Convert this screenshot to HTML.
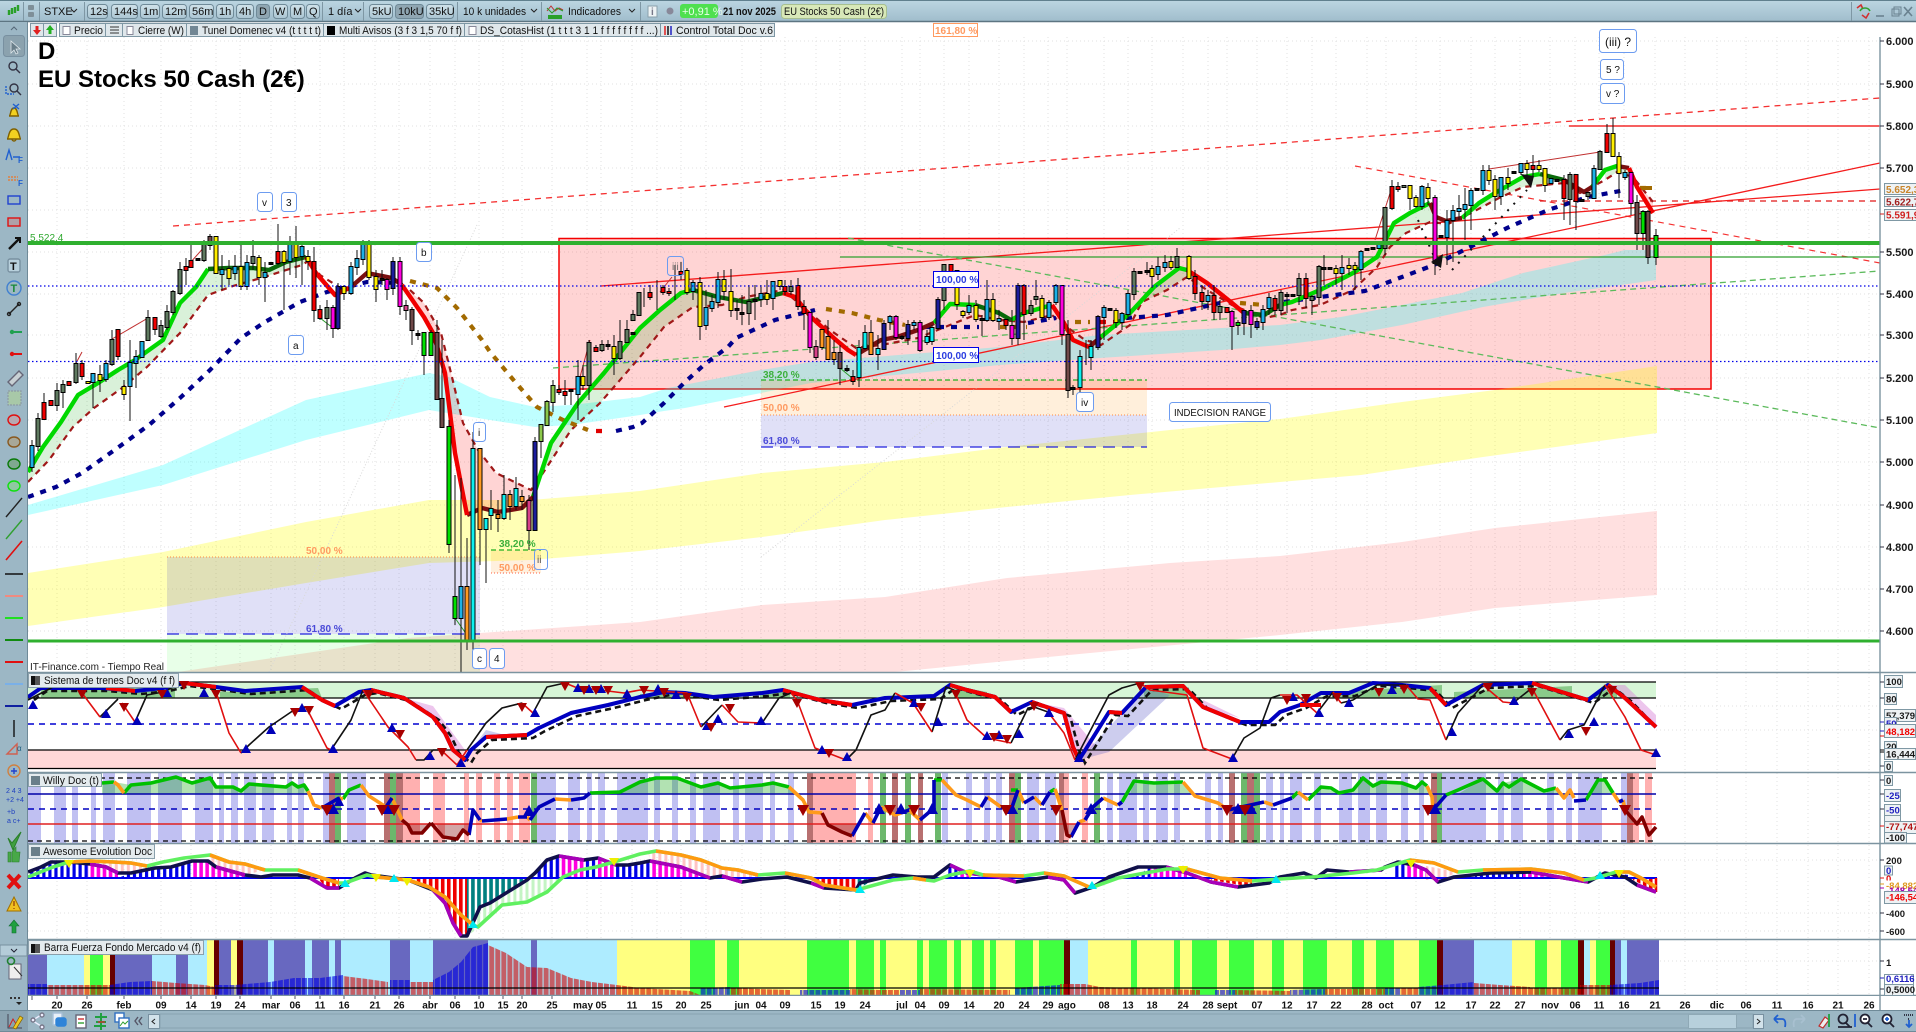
<!DOCTYPE html>
<html lang="es"><head><meta charset="utf-8"><title>EU Stocks 50 Cash (2€)</title>
<style>
html,body{margin:0;padding:0;background:#fff;overflow:hidden}
svg{display:block}
text{font-family:"Liberation Sans",sans-serif;font-size:11px;fill:#111}
.ax text{font-size:9.5px;font-weight:bold;fill:#1a1a1a}
.ax .pr{font-size:11px}
.ax .pb{font-size:10px}
.d text{font-size:10px;fill:#111;text-anchor:middle;font-weight:bold}
.n{fill:none}
.lb{fill:#fff;stroke:#6d9cf0;stroke-width:1}
.bt{fill:url(#btn);stroke:#6f8a98;stroke-width:1}
.sel{fill:#8fa6b2;stroke:#6f8a98;stroke-width:1}
.ce{fill:#dfe7eb;stroke:#7e97a4;stroke-width:1}
.pt{fill:#e4ebee;stroke:#8aa0ac;stroke-width:1}
.bx{fill:#eef2f4;stroke:#7f98a4;stroke-width:1}
.b path{fill:none;stroke-width:3}
</style></head><body>
<svg xmlns="http://www.w3.org/2000/svg" width="1916" height="1032" viewBox="0 0 1916 1032">
<defs>
<linearGradient id="top" x1="0" y1="0" x2="0" y2="1"><stop offset="0" stop-color="#bcd6e2"/><stop offset="1" stop-color="#9fbccb"/></linearGradient>
<linearGradient id="btn" x1="0" y1="0" x2="0" y2="1"><stop offset="0" stop-color="#d0e2ea"/><stop offset="1" stop-color="#aac5d2"/></linearGradient>
<filter id="o" filterUnits="userSpaceOnUse" x="0" y="0" width="1916" height="1032"><feMorphology in="SourceAlpha" operator="dilate" radius="0.8" result="d"/><feMerge><feMergeNode in="d"/><feMergeNode in="SourceGraphic"/></feMerge></filter>
<clipPath id="cm"><rect x="28" y="37" width="1852" height="635"/></clipPath>
<pattern id="pb" width="6.04" height="4" patternUnits="userSpaceOnUse"><rect width="3.2" height="4" fill="#0000e6"/></pattern>
<pattern id="pm" width="6.04" height="4" patternUnits="userSpaceOnUse"><rect width="3.6" height="4" fill="#ff00e0"/></pattern>
<pattern id="pr" width="6.04" height="4" patternUnits="userSpaceOnUse"><rect width="3.6" height="4" fill="#f00000"/></pattern>
<pattern id="pt" width="6.04" height="4" patternUnits="userSpaceOnUse"><rect width="3.6" height="4" fill="#008080"/></pattern>
<pattern id="pp" width="6.04" height="4" patternUnits="userSpaceOnUse"><rect width="3" height="4" fill="#ffc4c4"/></pattern>
<pattern id="pg" width="6.04" height="4" patternUnits="userSpaceOnUse"><rect width="3" height="4" fill="#c4f4c4"/></pattern>
<pattern id="hb" width="6.04" height="4" patternUnits="userSpaceOnUse"><rect width="5" height="4" fill="#0000e0" fill-opacity=".62"/></pattern>
<pattern id="hr" width="6.04" height="4" patternUnits="userSpaceOnUse"><rect width="5" height="4" fill="#d00000" fill-opacity=".6"/></pattern>
</defs>

<rect width="1916" height="1032" fill="#fff"/>

<!-- grid -->
<g stroke="#e2e2e2" stroke-width="1" stroke-dasharray="1 3" fill="none">
<path d="M28 41H1880M28 84H1880M28 126H1880M28 168H1880M28 210H1880M28 252H1880M28 294H1880M28 335H1880M28 378H1880M28 420H1880M28 462H1880M28 505H1880M28 547H1880M28 589H1880M28 631H1880M28 706H1880M28 730H1880M28 860H1880M28 913H1880M28 931H1880M28 961H1880"/>
<path d="M57 37V995M87 37V995M124 37V995M161 37V995M191 37V995M216 37V995M240 37V995M271 37V995M295 37V995M320 37V995M344 37V995M375 37V995M399 37V995M430 37V995M455 37V995M479 37V995M503 37V995M522 37V995M552 37V995M587 37V995M601 37V995M632 37V995M657 37V995M681 37V995M706 37V995M742 37V995M761 37V995M785 37V995M816 37V995M840 37V995M865 37V995M902 37V995M920 37V995M944 37V995M969 37V995M999 37V995M1024 37V995M1048 37V995M1067 37V995M1104 37V995M1128 37V995M1152 37V995M1183 37V995M1208 37V995M1227 37V995M1257 37V995M1287 37V995M1312 37V995M1336 37V995M1367 37V995M1386 37V995M1416 37V995M1440 37V995M1471 37V995M1495 37V995M1520 37V995M1550 37V995M1575 37V995M1599 37V995M1624 37V995M1655 37V995M1685 37V995M1717 37V995M1746 37V995M1777 37V995M1808 37V995M1838 37V995M1869 37V995"/>
</g>

<g clip-path="url(#cm)">
<polygon points="1285,37 1880,37 1880,32.5 1285,23" fill="#d6ffd0"/>
<path d="M1285 23L1880 32.5" stroke="#22e822" stroke-width="1.6" fill="none"/>
<path d="M780 36.5H1880" stroke="#ff8c40" stroke-width="1" stroke-dasharray="5 3" fill="none"/>

<!-- red rectangle -->
<rect x="559" y="238.5" width="1152" height="150.5" fill="#ff0000" fill-opacity=".17" stroke="#f40000" stroke-width="1.5"/>

<!-- bands -->
<polygon fill="#ffff00" fill-opacity=".29" points="28,573 163,552 306,522 429,500 531,500 640,491 762,473 885,462 1007,447 1170,430 1280,419 1402,402 1495,390 1657,366 1657,433 1483,457 1361,475 1280,482 1130,495 1007,507 885,520 762,537 640,551 531,560 429,563 306,583 163,607 28,626"/>
<polygon fill="#ff0000" fill-opacity=".12" points="171,673 408,638 640,622 762,605 885,597 1007,578 1170,563 1280,556 1402,542 1495,528 1657,511 1657,595 1495,608 1402,622 1280,635 1048,657 885,673"/>
<polygon fill="#00ffff" fill-opacity=".25" points="28,505 163,465 306,400 429,373 449,377 490,397 535,407 571,405 640,397 668,388 761,370 811,362 1000,347 1100,335 1222,328 1280,325 1341,317 1402,305 1462,293 1523,273 1605,255 1625,250 1656,250 1656,280 1564,293 1483,307 1402,325 1321,340 1280,345 1222,350 1100,358 1000,365 811,383 761,393 685,408 664,411 640,415 571,425 535,427 490,420 429,410 306,440 163,485 28,515"/>

<!-- retracements -->
<rect x="167" y="557" width="313" height="77" fill="#2020c8" fill-opacity=".14"/>
<rect x="167" y="634" width="313" height="38" fill="#00ff00" fill-opacity=".09"/>
<path d="M167 557H480" stroke="#ff8c40" stroke-dasharray="1 2" fill="none"/>
<path d="M167 634H480" stroke="#2222dd" stroke-width="1.2" stroke-dasharray="12 7" fill="none"/>
<rect x="761" y="380" width="386" height="35" fill="#ff8c00" fill-opacity=".14"/>
<rect x="761" y="415" width="386" height="32" fill="#2020c8" fill-opacity=".14"/>
<path d="M761 380H1147" stroke="#22b022" stroke-width="1.2" stroke-dasharray="5 3" fill="none"/>
<path d="M761 415H1147" stroke="#ff8c40" stroke-dasharray="1 2" fill="none"/>
<path d="M761 447H1147" stroke="#2222dd" stroke-width="1.2" stroke-dasharray="12 7" fill="none"/>
<rect x="491" y="550" width="50" height="23" fill="#ff8c00" fill-opacity=".13"/>
<path d="M491 550H541" stroke="#22b022" stroke-width="1.2" stroke-dasharray="5 3" fill="none"/>
<path d="M491 573H541" stroke="#ff6040" stroke-dasharray="1 2" fill="none"/>

<!-- faint diagonals -->
<path d="M269 672L477 225M761 557L1180 228" stroke="#d8d8d8" stroke-dasharray="1 2" fill="none"/>

<!-- area fills -->
<g fill-opacity=".15" fill="#00a000">
<polygon points="28,472 43,447 61,422 78,395 98,383 118,370 135,360 163,340 180,303 196,287 208,269 229,268 253,268 269,270 286,262 306,257 310,260 302,265 261,278 233,286 208,295 180,333 147,367 122,388 94,408 73,427 49,460 28,482"/>
<polygon points="533,497 551,443 578,403 604,373 640,328 660,310 681,293 693,290 718,297 722,305 693,307 664,327 640,357 600,403 571,430 543,473"/>
<polygon points="1130,313 1154,287 1179,268 1187,270 1207,290 1187,277 1167,290 1142,302"/>
<polygon points="1377,257 1394,223 1410,213 1430,203 1436,217 1430,222 1406,233 1390,247 1377,267"/>
<polygon points="1479,203 1495,193 1523,177 1540,174 1564,180 1523,187 1499,198 1471,213"/>
<polygon points="1605,170 1617,166 1629,168 1633,177 1617,172 1605,180"/>
</g>
<g fill="#ff0000" fill-opacity=".17">
<polygon points="402,285 424,317 433,333 445,373 455,453 467,515 482,508 498,512 522,508 533,497 531,490 496,473 478,450 463,423 451,373 441,333 424,303"/>
<polygon points="1629,168 1637,187 1653,213 1653,202 1633,177"/>
</g>

<!-- trend lines -->
<g fill="none">
<path d="M173 226L1880 98" stroke="#f53030" stroke-width="1.3" stroke-dasharray="6 5"/>
<path d="M1355 166L1880 263" stroke="#f53030" stroke-width="1.2" stroke-dasharray="6 5"/>
<path d="M1540 201H1880" stroke="#e01818" stroke-width="1.2" stroke-dasharray="6 5"/>
<path d="M1569 126H1880" stroke="#f00000" stroke-width="1.3"/>
<path d="M601 286L1880 189M724 407L1880 163" stroke="#f41c1c" stroke-width="1.3"/>
<path d="M840 257H1880" stroke="#2f9f2f" stroke-width="1.2"/>
<path d="M848 238L1880 428M553 368L1880 271" stroke="#5cba5c" stroke-width="1.3" stroke-dasharray="6 4"/>
<path d="M112 339L148 318M190 263L206 245M75 365L82 352M580 377L590 340M1375 240L1392 187M1489 169L1600 152M660 292L672 277" stroke="#c03030" stroke-width="1"/>
<path d="M840 368L852 378M320 318L333 328M455 618L467 635" stroke="#2a9a2a" stroke-width="1"/>
<path d="M1418 220L1440 270M1452 270L1527 190" stroke="#111" stroke-width="2" stroke-dasharray="2 7"/>
</g>

<!-- follow dashed -->
<path fill="none" stroke="#a01818" stroke-width="2.2" stroke-dasharray="6 5" d="M28 482L49 460 73 427 94 408 122 388 147 367 180 333 208 295 233 286 261 278 302 265 310 260 320 275 339 287M410 290L424 303 441 333 451 373 463 423 478 450 496 473 531 490 543 473 571 430 600 403 640 357 664 327 693 307 722 305 746 297 783 290 795 300 830 330 856 348 881 345 918 338 950 325 975 315 1000 320 1024 322 1052 315 1064 325 1085 340 1101 345 1130 325 1142 302 1167 290 1187 277 1207 290 1232 305 1264 318 1280 315 1292 310 1320 305 1353 290 1377 267 1390 247 1406 233 1430 222 1448 224 1471 213 1499 198 1523 187 1564 183 1580 193 1605 180 1617 172 1633 177 1653 202"/>

<!-- navy/brown dashed -->
<g fill="none" stroke-width="4.2" stroke-dasharray="6 7">
<path stroke="#00008c" d="M28 497L56 487 82 473 116 449 149 425 180 398 210 370 241 338 265 322 300 302 327 292 367 282 402 283M616 431L633 427 642 423 664 403 685 382 705 364 728 347 736 338 775 320 815 310M925 327L979 327M1028 323L1056 318M1126 318L1167 315 1220 303M1284 302L1320 297 1365 291 1402 277 1434 265 1470 247 1507 228 1548 210 1588 197 1625 190"/>
<path stroke="#a26a00" d="M410 281L437 288 457 308 482 340 490 352 516 383 537 407 563 420 588 430M826 309L852 313 879 320 905 325M1000 327L1027 327M1075 322L1090 322M1240 303L1264 305M1640 188H1648"/>
<path stroke="#e00000" d="M596 431H608M1100 322H1115"/>
</g>

<!-- main lines -->
<g fill="none" stroke-width="4.4" stroke-linejoin="round">
<path stroke="#00d800" d="M28 472L43 447 61 422 78 395 98 383 118 370 135 360 163 340 180 303 196 287 208 269M533 497L551 443 578 403 604 373 640 328 660 310 681 293 693 290M934 323L950 304 975 305M1011 320L1024 313 1052 305M1101 337L1130 313 1154 287 1179 268 1187 270M1280 305L1292 302 1320 290 1353 273 1377 257 1394 223 1410 213 1430 203M1462 218L1479 203 1495 193 1523 177 1540 174M1592 187L1605 170 1617 166"/>
<path stroke="#0a6a0a" d="M208 269L229 268 253 268 269 270 286 262 306 257M693 290L718 297 746 302 783 293M975 305L999 313 1011 320M1244 313L1264 315 1280 305M1540 174L1564 180"/>
<path stroke="#7a1010" d="M351 287L367 273 392 278 402 285M467 515L482 508 498 512 522 508 533 497M856 355L881 340 897 337 918 330 934 323M1089 347L1101 337M1430 203L1436 217 1446 221 1462 218M1564 180L1584 192 1592 187M1617 166L1629 168"/>
<path stroke="#f00000" d="M306 257L316 273 335 295 351 287M402 285L424 317 433 333 445 373 455 453 467 515M783 293L795 297 811 317 836 340 848 350 856 355M1052 305L1064 323 1073 340 1089 347M1187 270L1207 283 1232 303 1244 313M1629 168L1637 187 1653 213"/>
</g>

<!-- candle wicks -->
<path fill="none" stroke="#111" stroke-width="1" shape-rendering="crispEdges" d="M32 440V472M38 413V451M44 393V420M57 383V411M63 380V408M76 353V384M82 360V380M93 374V408M100 365V392M106 360V382M112 330V366M118 330V360M124 380V400M130 340V421M136 350V388M148 310V340M155 318V335M161 320V338M167 305V330M173 290V315M180 262V295M186 258V285M191 245V265M204 240V262M210 234V250M216 236V273M222 255V290M229 260V285M235 255V280M241 245V290M247 255V290M253 240V270M259 255V285M265 262V302M278 224V265M284 250V310M290 236V275M296 226V278M302 243V285M308 250V270M314 247V322M320 305V320M327 300V330M333 305V338M338 283V330M344 285V300M351 262V295M357 250V275M363 240V265M369 240V280M376 270V302M382 270V285M387 278V300M393 257V295M400 257V315M406 300V320M412 307V345M418 330V340M424 333V375M431 330V355M437 320V400M442 340V427M449 420V553M455 475V625M461 478V672M467 538V650M473 432V650M480 449V565M486 519V583M491 490V530M498 500V532M504 475V520M510 490V520M516 477V510M522 490V510M529 495V550M535 437V530M541 425V458M547 400V425M553 380V412M559 385V395M565 380V405M571 390V405M578 360V420M583 365V390M589 340V400M596 345V352M602 340V352M608 340V350M614 335V375M620 320V360M627 320V342M633 310V320M644 288V307M650 285V300M657 280V310M663 285V295M669 288V296M675 265V300M681 262V280M687 268V295M693 280V300M700 277V340M706 290V330M712 295V312M718 272V308M724 270V300M731 269V317M737 300V320M742 295V325M749 285V325M755 285V320M761 285V307M767 280V305M773 283V310M780 280V290M785 280V295M791 280V295M798 278V310M804 300V330M810 313V353M816 340V360M822 335V350M828 320V360M834 340V365M840 345V385M847 365V372M853 370V385M859 340V387M865 325V350M871 320V350M878 335V370M884 320V350M890 315V330M896 315V340M902 335V340M908 320V345M914 320V330M920 320V352M927 330V345M932 325V345M938 297V330M944 265V310M951 265V275M957 270V310M963 310V318M969 295V315M976 300V322M982 315V336M987 280V322M993 293V322M999 310V330M1006 320V330M1012 310V345M1018 283V345M1024 284V340M1031 300V316M1036 280V305M1042 295V320M1049 300V320M1056 284V305M1062 285V345M1068 320V398M1073 385V395M1080 350V392M1086 340V365M1091 340V370M1098 315V350M1104 305V340M1116 308V328M1122 312V330M1128 290V320M1134 268V300M1147 262V275M1152 265V288M1158 257V280M1165 255V272M1171 256V270M1177 248V268M1189 255V280M1195 270V300M1202 285V310M1208 290V310M1214 285V320M1220 300V320M1232 310V350M1238 320V335M1244 310V335M1251 305V338M1257 318V330M1263 305V330M1269 293V315M1275 295V315M1281 290V315M1287 292V313M1299 273V305M1306 273V308M1312 295V315M1319 265V305M1324 255V285M1336 265V285M1342 255V290M1349 258V275M1355 262V290M1361 250V280M1385 208V255M1392 180V210M1398 182V192M1410 186V210M1416 195V208M1422 185V210M1428 183V205M1435 195V275M1447 210V265M1453 205V262M1459 195V220M1465 188V240M1471 188V230M1483 165V195M1489 165V185M1495 175V210M1501 180V205M1508 168V190M1521 163V175M1527 160V175M1533 155V178M1539 160V172M1545 168V192M1551 178V182M1564 175V220M1570 172V225M1576 175V230M1588 193V200M1594 165V198M1600 150V170M1607 124V152M1613 118V156M1619 152V198M1625 170V180M1631 172V215M1637 195V250M1643 210V250M1648 210V264M1656 229V265"/>

<!-- candle bodies -->
<g class="b" filter="url(#o)" shape-rendering="crispEdges">
<path stroke="#1eb1e6" d="M32 446V467M93 374V382M106 364V379M130 363V386M136 357V363M142 342V357M222 270V274M235 267V273M247 263V286M265 273V277M290 245V261M302 247V256M351 267V293M357 259V267M363 245V259M461 587V618M578 377V394M693 283V291M706 308V325M712 302V308M718 280V302M761 294V299M773 282V298M890 317V322M914 323V325M969 306V312M987 300V320M999 319V321M1049 303V317M1056 286V302M1104 308V317M1122 314V322M1128 294V314M1158 267V274M1165 263V267M1208 296V301M1263 310V322M1269 298V308M1342 268V273M1361 252V269M1379 243V248M1422 187V206M1447 221V237M1453 211V220M1459 209V211M1465 205V209M1471 191V205M1483 171V190M1501 178V196M1521 164V172M1551 179V183M1594 169V198M1625 173V177"/>
<path stroke="#5f7a60" d="M38 419V446M57 391V405M63 385V392M76 364V382M112 340V364M148 318V340M161 326V336M167 312V327M173 292V312M180 270V293M204 245V260M253 257V263M327 308V318M589 343V385M602 345V350M620 342V358M627 330V342M633 315V320M639 293V315M749 302V313M791 287V291M944 265V300M1031 306V313M1036 297V299M1134 272V294M1177 257V267M1220 307V312M1281 293V310M1299 279V295M1312 297V300M1319 267V297M1385 208V248M1404 186V187M1570 175V199M1588 193V196M1600 152V169"/>
<path stroke="#f00000" d="M44 403V419M51 401V405M69 382V385M82 364V376M118 330V356M155 318V329M186 267V270M191 261V267M278 252V263M314 262V310M320 310V318M559 390V392M565 392V395M596 348V351M650 293V297M663 288V292M669 292V293M681 272V274M785 287V291M798 286V306M804 307V313M853 377V381M951 265V271M1006 320V325M1024 286V314M1195 277V293M1202 293V301M1214 296V312M1227 308V312M1275 299V310M1306 279V298M1392 187V208M1398 187V189M1533 166V169M1564 180V198M1576 175V201M1607 134V152"/>
<path stroke="#ffee00" d="M88 382V383M100 375V380M124 387V394M216 237V273M229 269V278M241 267V286M259 258V277M284 252V262M296 245V257M308 257V261M344 287V293M369 245V277M376 277V289M583 377V385M614 347V358M687 271V292M700 283V326M724 280V291M731 292V310M767 294V299M780 281V286M957 271V304M963 312V315M976 306V319M993 300V320M1042 299V317M1116 311V322M1152 269V276M1171 262V267M1189 257V278M1336 269V273M1349 266V268M1355 266V269M1410 186V198M1416 198V206M1428 188V198M1489 171V180M1495 180V196M1508 178V183M1527 164V169M1539 166V169M1545 169V185M1613 134V156M1619 157V173"/>
<path stroke="#00e000" d="M424 333V355M431 333V355M449 427V544M455 597V618M1238 323V325M1643 212V233M1656 236V257"/>
<path stroke="#8cc84c" d="M541 425V441M547 402V425M553 386V402"/>
<path stroke="#ff00e0" d="M333 308V328M387 280V289M400 262V306M810 313V347M896 317V337M920 323V350M1012 326V338M1062 286V334M1232 312V326M1251 311V324M1435 198V263M1631 173V203"/>
<path stroke="#1a1a9c" d="M338 287V328M393 262V288M535 442V530M884 324V349M908 325V338M938 300V328M1018 286V338M1098 317V347M1244 311V323M1257 322V327"/>
<path stroke="#704848" d="M210 237V245M412 310V330M437 333V399M442 399V427M840 353V368M1068 335V390M1637 203V233M1648 212V257"/>
<path stroke="#d84088" d="M406 306V310M529 501V530M816 347V357"/>
<path stroke="#ff9a20" d="M467 587V640M480 449V529M498 515V518M510 495V506M522 497V501M822 330V347M828 337V359M834 353V359M871 333V354"/>
<path stroke="#10f0f0" d="M473 449V640M486 519V529M491 509V515M504 495V518M516 489V506M859 348V377M865 333V348M878 349V354M927 337V342M932 328V341M1080 357V387M1091 347V357"/>
<path stroke="#111" stroke-width="2" d="M198 259V260M271 263V264M382 279V280M418 334V335M571 390V391M608 345V346M633 333V334M737 309V310M742 313V314M755 300V301M847 369V370M902 337V338M982 319V320M1073 388V389M1110 309V310M1140 272V273M1147 271V272M1287 295V296M1293 295V296M1324 268V269M1330 268V269M1367 249V250M1373 248V249M1441 236V237M1477 189V190M1514 172V173M1557 180V181M1582 200V201"/>
</g>
<path d="M1441 268l-10-6 12-8zM1531 188l-10-14 13 2z" fill="#111"/>
<rect x="1645" y="186" width="7" height="4" fill="#a26a00"/>

<!-- horizontal levels -->
<rect x="28" y="241" width="1852" height="4" fill="#2fb02f"/>
<rect x="28" y="639.5" width="1852" height="3" fill="#2fb02f"/>
<path d="M28 286H1878M28 361.5H1878" stroke="#0000e8" stroke-width="1.2" stroke-dasharray="1.5 2.5" fill="none"/>
</g>

<!-- main chart text -->
<text x="38" y="59" style="font-size:24px;font-weight:bold;fill:#000">D</text>
<text x="38" y="87" style="font-size:24px;font-weight:bold;fill:#000">EU Stocks 50 Cash (2€)</text>
<text x="30" y="241" style="font-size:10px;fill:#2fa82f">5.522,4</text>
<text x="30" y="670" style="font-size:10px;fill:#222">IT-Finance.com - Tiempo Real</text>

<g style="font-size:10px">
<text x="306" y="554" style="font-size:10px;font-weight:bold;fill:#ff9a60">50,00 %</text>
<text x="306" y="632" style="font-size:10px;font-weight:bold;fill:#4a4ad8">61,80 %</text>
<text x="499" y="547" style="font-size:10px;font-weight:bold;fill:#3cb03c">38,20 %</text>
<text x="499" y="571" style="font-size:10px;font-weight:bold;fill:#ff9a60">50,00 %</text>
<text x="763" y="378" style="font-size:10px;font-weight:bold;fill:#3cb03c">38,20 %</text>
<text x="763" y="411" style="font-size:10px;font-weight:bold;fill:#ff9a60">50,00 %</text>
<text x="763" y="444" style="font-size:10px;font-weight:bold;fill:#4a4ad8">61,80 %</text>
</g>
<rect x="933.5" y="23.5" width="44" height="13" fill="#fff" stroke="#ff9a60"/>
<text x="935" y="34" style="font-size:10px;font-weight:bold;fill:#ff9a60">161,80 %</text>
<g>
<rect x="933.5" y="271.5" width="45" height="16" fill="#fff" stroke="#0000e8"/><text x="936" y="283" style="font-size:10px;font-weight:bold;fill:#2a3ce0">100,00 %</text>
<rect x="933.5" y="347.5" width="45" height="15" fill="#fff" stroke="#0000e8"/><text x="936" y="359" style="font-size:10px;font-weight:bold;fill:#2a3ce0">100,00 %</text>
</g>
<g>
<rect class="lb" x="257.5" y="192.5" width="15" height="19" rx="3"/><text x="262" y="206" style="font-size:10px">v</text>
<rect class="lb" x="281.5" y="192.5" width="15" height="19" rx="3"/><text x="286" y="206" style="font-size:10px">3</text>
<rect class="lb" x="416.5" y="242.5" width="15" height="19" rx="3"/><text x="421" y="256" style="font-size:10px">b</text>
<rect class="lb" x="288.5" y="335.5" width="15" height="19" rx="3"/><text x="293" y="349" style="font-size:10px">a</text>
<rect class="lb" x="473.5" y="422.5" width="12" height="19" rx="3" fill-opacity=".8"/><text x="478" y="436" style="font-size:10px">i</text>
<rect class="lb" x="534.5" y="549.5" width="13" height="20" rx="3" style="fill:none"/><text x="537" y="563" style="font-size:10px;fill:#555">ii</text>
<rect class="lb" x="472.5" y="648.5" width="14" height="20" rx="3"/><text x="477" y="662" style="font-size:10px">c</text>
<rect class="lb" x="489.5" y="648.5" width="15" height="20" rx="3"/><text x="494" y="662" style="font-size:10px">4</text>
<rect class="lb" x="667.5" y="256.5" width="16" height="19" rx="3" style="fill:none"/><text x="672" y="270" style="font-size:10px;fill:#666">iii</text>
<rect class="lb" x="1076.5" y="392.5" width="17" height="19" rx="3"/><text x="1081" y="406" style="font-size:10px">iv</text>
<rect class="lb" x="1169.5" y="402.5" width="101" height="19" rx="3"/><text x="1174" y="416" textLength="92" lengthAdjust="spacingAndGlyphs" style="font-size:10.5px">INDECISION RANGE</text>
<rect class="lb" x="1599.5" y="29.5" width="37" height="23" rx="3"/><text x="1605" y="46" style="font-size:12px">(iii) ?</text>
<rect class="lb" x="1600.5" y="59.5" width="23" height="20" rx="3"/><text x="1606" y="73" style="font-size:10px">5 ?</text>
<rect class="lb" x="1600.5" y="83.5" width="24" height="20" rx="3"/><text x="1606" y="97" style="font-size:10px">v ?</text>
</g>

<!-- PANEL 2 : Sistema de trenes -->
<rect x="28" y="673" width="1628" height="99" fill="#fff"/>
<rect x="28" y="682" width="1628" height="16" fill="#d6f5d6"/>
<rect x="28" y="750" width="1628" height="18" fill="#ffd8d8"/>
<g fill="#3da03d" fill-opacity=".5">
<polygon points="41,690 175,684 175,698 41,698"/><polygon points="220,692 318,688 322,698 220,698"/><polygon points="954,686 987,692 987,698 954,698"/><polygon points="1144,688 1187,688 1187,698 1144,698"/><polygon points="1333,692 1442,685 1442,698 1333,698"/><polygon points="1454,692 1572,686 1572,698 1454,698"/><polygon points="1592,695 1617,686 1617,698 1592,698"/><polygon points="640,694 700,694 700,698 640,698"/><polygon points="760,693 790,690 790,698 760,698"/>
</g>
<g fill="#d880d8" fill-opacity=".45">
<polygon points="1608,685 1625,685 1656,715 1656,727 1625,698"/><polygon points="404,698 433,706 465,750 453,750 433,717"/><polygon points="1032,702 1064,708 1095,745 1079,760 1064,713"/><polygon points="1203,700 1240,718 1203,707"/>
</g>
<g fill="#5858c8" fill-opacity=".3"><polygon points="1079,760 1146,687 1170,695 1109,752"/><polygon points="471,750 486,730 505,735 486,737"/></g>
<path d="M28 682H1656M28 698H1656M28 750H1656M28 768.5H1656" stroke="#000" stroke-width="1.2" fill="none"/>
<path d="M28 724H1656" stroke="#0000d0" stroke-width="1.6" stroke-dasharray="6 5" fill="none"/>
<path id="s2" fill="none" stroke="#111" stroke-width="2.6" stroke-dasharray="6 4" transform="translate(6 3)" d="M28 697L41 688 102 688 135 691 163 688 184 683 216 687 245 691 302 687 322 700 335 706 359 692 371 690 404 698 433 717 445 733 453 750 465 760 471 750 486 737 527 735 539 728 571 713 608 705 640 697 664 692 685 693 713 697 762 693 783 690 820 700 852 705 885 698 934 696 950 685 967 690 995 697 1011 712 1032 702 1064 713 1073 747 1079 760 1109 712 1122 713 1146 687 1183 686 1203 707 1240 722 1269 722 1280 712 1300 705 1321 693 1349 693 1373 683 1402 685 1430 688 1446 705 1483 685 1532 683 1588 700 1608 685 1625 698 1650 724"/>
<path fill="none" stroke="#0000c0" stroke-width="4" stroke-linejoin="round" d="M28 697L41 688 102 688 135 691 163 688 184 683 216 687 245 691 302 687 322 700 335 706 359 692 371 690 404 698 433 717 445 733 453 750 465 760 471 750 486 737 527 735 539 728 571 713 608 705 640 697 664 692 685 693 713 697 762 693 783 690 820 700 852 705 885 698 934 696 950 685 967 690 995 697 1011 712 1032 702 1064 713 1073 747 1079 760 1109 712 1122 713 1146 687 1183 686 1203 707 1240 722 1269 722 1280 712 1300 705 1321 693 1349 693 1373 683 1402 685 1430 688 1446 705 1483 685 1532 683 1588 700 1608 685 1625 698 1656 727"/>
<path fill="none" stroke="#f00000" stroke-width="4" stroke-linejoin="round" d="M106 688L135 691M184 683L216 687M302 687L322 700 335 706M371 690L404 698 433 717 445 733 453 750 465 760M486 737L527 735M783 690L820 700 852 705M950 685L967 690 995 697 1011 712M1032 702L1064 713 1073 747 1079 760M1109 712L1122 713M1146 687L1183 686 1203 707 1240 722M1300 705L1321 705M1430 688L1446 705M1532 683L1588 700M1608 685L1625 698 1656 727"/>
<path fill="none" stroke="#111" stroke-width="1.6" stroke-linejoin="round" d="M28 700L53 687M100 717L118 699M135 722L147 695 163 692 184 682M241 753L249 745 269 727 294 710 306 707M331 750L351 720 363 690M416 760L424 760 433 750 441 750M467 750L486 723 502 708 522 703M533 713L547 687 565 683M701 727L722 705M762 723L779 698 791 693M846 760L856 750 871 715 885 710 895 693M932 732L946 687 954 690M1011 743L1028 708 1034 707 1048 712M1075 760L1109 695 1122 688 1140 683M1232 759L1244 738 1260 728 1271 698 1280 695M1317 713L1333 692M1341 703L1353 700 1377 685 1406 685M1446 740L1458 713 1483 685M1513 703L1532 688M1560 740L1568 730 1584 725 1605 685"/>
<path fill="none" stroke="#e01010" stroke-width="1.6" stroke-linejoin="round" d="M82 693L100 717M122 703L135 722M216 692L229 733 241 753M306 707L327 748 331 750M363 690L388 727 408 747 416 760M441 750L457 765 467 750M522 703L533 713M565 683L575 687 624 693 640 690 687 693 701 727M722 705L738 722 762 723M791 693L797 700 815 748 846 760M895 693L913 703 932 732M954 690L967 720 987 738 1011 743M1048 712L1064 733 1075 760M1140 683L1150 690 1187 695 1203 748 1232 759M1280 695L1297 695 1317 713M1333 692L1341 703M1406 685L1418 699 1430 700 1446 740M1483 685L1503 702 1513 703M1532 688L1560 740M1605 685L1625 717 1641 750 1656 755"/>
<path fill="#0000b8" d="M33 709h5l-5-9-5 9zM106 718h5l-5-9-5 9zM137 725h5l-5-9-5 9zM167 697h5l-5-9-5 9zM204 697h5l-5-9-5 9zM246 753h5l-5-9-5 9zM271 734h5l-5-9-5 9zM302 712h5l-5-9-5 9zM333 753h5l-5-9-5 9zM392 732h5l-5-9-5 9zM430 760h5l-5-9-5 9zM461 767h5l-5-9-5 9zM535 717h5l-5-9-5 9zM578 692h5l-5-9-5 9zM589 693h5l-5-9-5 9zM601 693h5l-5-9-5 9zM627 698h5l-5-9-5 9zM658 693h5l-5-9-5 9zM676 699h5l-5-9-5 9zM707 730h5l-5-9-5 9zM718 723h5l-5-9-5 9zM761 725h5l-5-9-5 9zM822 754h5l-5-9-5 9zM847 761h5l-5-9-5 9zM914 707h5l-5-9-5 9zM938 726h5l-5-9-5 9zM987 740h5l-5-9-5 9zM999 739h5l-5-9-5 9zM1019 738h5l-5-9-5 9zM1049 717h5l-5-9-5 9zM1079 762h5l-5-9-5 9zM1233 762h5l-5-9-5 9zM1293 701h5l-5-9-5 9zM1319 717h5l-5-9-5 9zM1349 707h5l-5-9-5 9zM1392 694h5l-5-9-5 9zM1452 736h5l-5-9-5 9zM1514 705h5l-5-9-5 9zM1569 738h5l-5-9-5 9zM1594 726h5l-5-9-5 9zM1656 757h5l-5-9-5 9z"/>
<path fill="#a80000" d="M82 690h5l-5 9-5-9zM124 703h5l-5 9-5-9zM162 690h5l-5 9-5-9zM216 690h5l-5 9-5-9zM295 708h5l-5 9-5-9zM309 706h5l-5 9-5-9zM369 690h5l-5 9-5-9zM400 730h5l-5 9-5-9zM442 748h5l-5 9-5-9zM522 703h5l-5 9-5-9zM565 682h5l-5 9-5-9zM584 686h5l-5 9-5-9zM596 686h5l-5 9-5-9zM608 686h5l-5 9-5-9zM184 681h5l-5 9-5-9zM644 686h5l-5 9-5-9zM664 688h5l-5 9-5-9zM687 693h5l-5 9-5-9zM711 723h5l-5 9-5-9zM730 704h5l-5 9-5-9zM797 699h5l-5 9-5-9zM829 749h5l-5 9-5-9zM921 703h5l-5 9-5-9zM956 690h5l-5 9-5-9zM994 733h5l-5 9-5-9zM1007 735h5l-5 9-5-9zM1034 702h5l-5 9-5-9zM1140 682h5l-5 9-5-9zM1287 696h5l-5 9-5-9zM1306 694h5l-5 9-5-9zM1337 693h5l-5 9-5-9zM1379 688h5l-5 9-5-9zM1404 685h5l-5 9-5-9zM1488 683h5l-5 9-5-9zM1532 688h5l-5 9-5-9zM1586 727h5l-5 9-5-9zM1612 686h5l-5 9-5-9z"/>

<!-- PANEL 3 : Willy -->
<rect x="28" y="773" width="1628" height="70" fill="#fff"/>
<path fill="#c0c0f2" d="M28 773H41V843H28zM54 773H66V843H54zM72 773H78V843H72zM91 773H96V843H91zM103 773H115V843H103zM127 773H151V843H127zM158 773H182V843H158zM195 773H213V843H195zM219 773H224V843H219zM231 773H238V843H231zM244 773H256V843H244zM262 773H274V843H262zM287 773H292V843H287zM298 773H304V843H298zM323 773H329V843H323zM347 773H366V843H347zM537 773H556V843H537zM568 773H580V843H568zM587 773H592V843H587zM598 773H605V843H598zM617 773H648V843H617zM654 773H660V843H654zM672 773H678V843H672zM690 773H696V843H690zM703 773H720V843H703zM733 773H739V843H733zM745 773H763V843H745zM770 773H775V843H770zM788 773H794V843H788zM942 773H948V843H942zM966 773H972V843H966zM984 773H990V843H984zM996 773H1002V843H996zM1027 773H1039V843H1027zM1045 773H1056V843H1045zM1107 773H1113V843H1107zM1119 773H1137V843H1119zM1143 773H1149V843H1143zM1156 773H1168V843H1156zM1174 773H1180V843H1174zM1205 773H1211V843H1205zM1218 773H1223V843H1218zM1266 773H1273V843H1266zM1280 773H1284V843H1280zM1290 773H1302V843H1290zM1314 773H1321V843H1314zM1339 773H1352V843H1339zM1358 773H1370V843H1358zM1376 773H1387V843H1376zM1401 773H1408V843H1401zM1419 773H1424V843H1419zM1442 773H1486V843H1442zM1498 773H1504V843H1498zM1511 773H1523V843H1511zM1547 773H1554V843H1547zM1566 773H1572V843H1566zM1578 773H1602V843H1578zM1621 773H1627V843H1621z"/>
<path fill="#ffb0b0" d="M403 773H420V843H403zM433 773H445V843H433zM464 773H469V843H464zM476 773H482V843H476zM494 773H500V843H494zM507 773H513V843H507zM519 773H530V843H519zM813 773H856V843H813zM868 773H873V843H868zM1064 773H1069V843H1064zM1082 773H1088V843H1082zM1633 773H1639V843H1633zM1645 773H1652V843H1645z"/>
<path fill="#b87070" d="M329 773H335V843H329zM384 773H390V843H384zM396 773H403V843H396zM807 773H813V843H807zM892 773H898V843H892zM918 773H923V843H918zM1009 773H1015V843H1009zM1059 773H1064V843H1059zM1229 773H1235V843H1229zM1247 773H1254V843H1247zM1431 773H1437V843H1431zM1627 773H1633V843H1627z"/>
<path fill="#6cb86c" d="M335 773H341V843H335zM390 773H396V843H390zM531 773H537V843H531zM880 773H886V843H880zM905 773H911V843H905zM935 773H941V843H935zM1015 773H1021V843H1015zM1094 773H1100V843H1094zM1241 773H1247V843H1241zM1254 773H1260V843H1254zM1437 773H1442V843H1437z"/>
<g fill="#00a000" fill-opacity=".3">
<polygon points="102,794 102,783 114,782 131,785 151,783 176,777 192,783 210,778 216,787 233,787 241,791 249,784 286,787 292,783 298,787 304,785 308,794"/>
<polygon points="590,794 620,792 640,782 656,778 677,778 701,787 718,783 730,788 762,785 773,783 789,787 795,794"/>
<polygon points="1130,794 1134,781 1154,783 1183,782 1192,794"/>
<polygon points="1310,794 1321,787 1339,793 1353,790 1363,778 1373,786 1381,782 1402,783 1416,788 1422,782 1427,786 1430,794"/>
<polygon points="1458,794 1483,779 1497,791 1503,783 1521,779 1544,791 1556,788 1560,794"/>
<polygon points="1590,794 1598,780 1605,780 1613,793"/>
</g>
<g fill="#800000" fill-opacity=".35">
<polygon points="408,824 412,833 422,833 431,824"/><polygon points="436,824 443,837 457,839 463,830 469,835 471,824"/><polygon points="828,824 842,832 852,836 857,824"/><polygon points="1064,824 1067,835 1071,837 1076,824"/>
</g>
<path d="M28 778H1656M28 841H1656" stroke="#000" stroke-width="1.2" stroke-dasharray="5 4" fill="none"/>
<path d="M28 794H1656" stroke="#0000a8" stroke-width="1.6" fill="none"/>
<path d="M28 809H1656" stroke="#0000c0" stroke-width="1.6" stroke-dasharray="6 5" fill="none"/>
<path d="M28 824H1656" stroke="#e02020" stroke-width="1.6" fill="none"/>
<g fill="none" stroke-width="3.6" stroke-linejoin="round">
<path stroke="#00c000" d="M102 783L114 782M124 793L131 785 151 783 176 777 192 783 210 778 216 787 233 787 241 791 249 784 286 787 292 783 298 787 304 785 308 791M343 799L349 790 361 785M590 793L620 792 640 782 656 778 677 778 701 787 718 783 730 788 762 785 773 783 789 787M934 780L942 780M1011 790L1018 790M1050 792L1055 789M1122 802L1134 781 1154 783 1183 782M1292 798L1298 792M1308 800L1321 787 1331 788 1339 793 1353 790 1363 778 1373 786 1381 782 1402 783 1416 788 1422 782 1427 786M1446 795L1458 790 1483 779 1497 791 1503 783 1509 787 1521 779 1544 791 1556 788M1586 800L1598 780 1605 780 1613 793"/>
<path stroke="#ff9a1a" d="M114 782L118 785 124 793M308 791L314 805 322 808M339 798L343 799M361 785L369 796 386 807M392 798L402 820M480 820L482 821M507 819L518 817M530 820L527 817M555 799L571 800M789 787L803 800 809 812 822 813M865 813L873 823M881 807L895 815 901 813M909 810L920 820M942 780L956 795 967 800M967 800L981 807M987 797L1001 807M1018 790L1024 803M1034 797L1042 805M1055 789L1062 810M1079 822L1085 820M1103 798L1118 805M1183 782L1195 796 1205 799M1205 799L1218 803 1228 810M1264 802L1273 805M1298 792L1308 800M1427 786L1432 797 1433 810M1556 788L1564 798 1570 790 1574 798M1613 793L1619 802M1623 800L1625 810"/>
<path stroke="#0000b8" d="M322 808L339 798M386 807L392 798M469 835L473 810 480 820M482 821L507 819M518 817L527 817M530 820L539 807 555 799M571 800L584 798 590 793M852 836L865 813M873 823L881 807M901 813L909 810M920 820L934 808 934 780M981 807L987 797M1001 807L1011 810 1018 790M1024 803L1034 797M1042 805L1050 792M1071 837L1079 822M1085 820L1093 807 1103 798M1118 805L1122 802M1228 810L1264 802M1273 805L1292 798M1433 810L1446 795M1574 801L1586 800M1619 802L1623 800"/>
<path stroke="#800000" d="M402 820L408 825 412 833 422 833 431 823M431 823L443 837 457 839 463 830 469 835M822 813L828 825 842 832 852 836M1062 810L1067 835 1071 837M1625 810L1637 824 1642 817 1649 835 1656 827"/>
</g>
<path fill="#0000b8" d="M333 814h6l-6-11-6 11zM339 806h5l-5-10-5 10zM388 814h6l-6-11-6 11zM529 816h6l-6-11-6 11zM879 814h6l-6-11-6 11zM901 814h6l-6-11-6 11zM932 814h6l-6-11-6 11zM1012 814h6l-6-11-6 11zM1091 814h6l-6-11-6 11zM1238 814h6l-6-11-6 11zM1251 814h6l-6-11-6 11zM1435 814h6l-6-11-6 11z"/>
<path fill="#a00000" d="M327 805h6l-6 11-6-11zM382 805h6l-6 11-6-11zM394 805h6l-6 11-6-11zM803 805h6l-6 11-6-11zM890 805h6l-6 11-6-11zM914 805h6l-6 11-6-11zM1006 805h6l-6 11-6-11zM1056 805h6l-6 11-6-11zM1227 805h6l-6 11-6-11zM1245 805h6l-6 11-6-11zM1428 805h6l-6 11-6-11zM1625 805h6l-6 11-6-11z"/>

<!-- PANEL 4 : Awesome -->
<g>
<polygon fill="url(#pb)" points="28,878 28,872 41,867 51,862 69,862 88,864 88,878"/>
<polygon fill="url(#pm)" points="88,878 88,864 106,867 118,873 118,878"/>
<polygon fill="url(#pb)" points="118,878 131,873 155,868 171,867 192,861 192,878"/>
<polygon fill="url(#pm)" points="192,878 192,861 208,861 216,867 245,875 250,878"/>
<polygon fill="url(#pr)" points="318,878 326,888 339,888 339,878"/>
<polygon fill="url(#pr)" points="412,878 433,890 445,903 453,923 461,936 467,936 467,878"/>
<polygon fill="url(#pt)" points="467,878 467,936 480,907 490,903 527,880 527,878"/>
<polygon fill="url(#pg)" points="467,936 480,907 490,903 527,880 535,878 563,878 547,892 527,902 502,905 480,927"/>
<polygon fill="url(#pp)" points="131,873 155,868 147,866 114,862 90,861 90,864 118,873"/>
<polygon fill="url(#pp)" points="210,855 229,862 265,870 245,875 216,867 208,861"/>
<polygon fill="url(#pb)" points="535,878 535,873 547,860 559,856 559,878"/>
<polygon fill="url(#pm)" points="559,878 559,856 571,858 584,860 584,878"/>
<polygon fill="url(#pb)" points="584,878 584,860 598,858 598,878"/>
<polygon fill="url(#pm)" points="598,878 598,858 616,865 616,878"/>
<polygon fill="url(#pb)" points="616,878 616,865 640,863 650,861 650,878"/>
<polygon fill="url(#pm)" points="650,878 650,861 681,867 710,878"/>
<polygon fill="url(#pp)" points="648,851 681,855 701,860 722,868 738,870 760,875 760,878 710,878 681,867 650,861"/>
<polygon fill="url(#pr)" points="815,878 823,888 856,890 856,878"/>
<polygon fill="url(#pt)" points="856,878 856,890 877,878"/>
<polygon fill="url(#pb)" points="945,878 950,865 960,868 960,878"/>
<polygon fill="url(#pm)" points="960,878 960,868 970,875 970,878"/>
<polygon fill="url(#pb)" points="1134,878 1150,867 1150,878"/>
<polygon fill="url(#pm)" points="1150,878 1150,867 1187,869 1187,878"/>
<polygon fill="url(#pr)" points="1211,878 1211,880 1252,887 1252,878"/>
<polygon fill="url(#pb)" points="1394,878 1394,866 1405,862 1405,878"/>
<polygon fill="url(#pm)" points="1405,878 1405,862 1414,865 1426,870 1426,878"/>
<polygon fill="url(#pp)" points="1426,866 1458,872 1440,880 1426,880"/>
<polygon fill="url(#pb)" points="1475,878 1475,875 1523,873 1523,878"/>
<polygon fill="url(#pm)" points="1523,878 1523,872 1545,875 1545,878"/>
<polygon fill="url(#pb)" points="1605,878 1610,873 1629,875 1629,878"/>
<polygon fill="url(#pr)" points="1633,878 1633,880 1657,892 1657,878"/>
</g>
<path d="M28 878H1657" stroke="#0000f0" stroke-width="2" fill="none"/>
<path d="M1656 878V892" stroke="#f00000" stroke-width="2.5" fill="none"/>
<g fill="none" stroke-width="3.6" stroke-linejoin="round">
<path stroke="#10104a" d="M28 872L41 867 51 862 69 862 90 864 106 867 118 873 131 873 155 868 171 867 192 861 208 861 216 867 245 875 261 877 273 875 298 875 310 878 327 888 339 888 355 878 365 873 371 875 408 880 433 890 445 903 453 923 461 936 467 936 480 907 490 903 527 880 535 873 547 860 559 856 571 858 584 860 598 858 616 865 628 865 640 863 650 861 681 867 710 878 722 876 742 882 762 879 787 877 811 883 824 888 856 890 860 883 893 875 917 877 934 877 950 865 967 873 999 877 1016 882 1048 877 1064 880 1075 893 1093 887 1109 877 1138 867 1166 867 1187 873 1211 882 1238 887 1269 883 1280 877 1304 873 1316 878 1327 870 1349 872 1381 870 1385 867 1398 862 1414 865 1426 870 1438 882 1454 877 1491 873 1531 872 1564 878 1588 882 1605 873 1625 877 1637 885 1656 892"/>
<path stroke="#a800b8" d="M90 864L106 867 118 873M216 867L245 875M310 878L327 888 339 888M433 890L445 903 453 923 461 936M559 856L584 860M598 858L616 865M650 861L681 867 710 878M722 876L742 882M811 883L824 888M950 865L967 873 999 877 1016 882M1048 877L1064 880 1075 893M1166 867L1187 873 1211 882 1238 887M1349 872L1381 870M1414 865L1426 870 1438 882M1531 872L1564 878 1588 882M1637 885L1656 892"/>
<path stroke="#60f060" d="M28 877L53 867 69 862 90 861 114 862 131 863 147 866 163 862 184 858 210 855 229 862 245 864 265 870 273 870 298 870 322 878 339 883 345 883 367 875 376 877 408 880 429 887 445 897 461 915 473 925 478 927 502 905 527 902 547 892 563 877 580 870 596 867 614 862 640 854 656 851 681 855 701 860 722 868 738 870 758 875 785 873 811 878 824 885 856 890 860 889 893 880 913 878 926 880 934 881 950 875 970 871 983 875 1024 876 1044 873 1064 876 1089 887 1093 887 1118 878 1167 869 1187 869 1220 878 1252 881 1280 879 1312 877 1353 873 1377 870 1410 860 1434 863 1458 872 1483 870 1531 869 1564 873 1584 880 1596 878 1616 872 1629 872 1641 878 1656 887"/>
<path stroke="#ff9a10" d="M69 862L90 861 114 862 131 863 147 866M210 855L229 862 245 864 265 870M298 870L322 878 339 883M376 877L408 880 429 887 445 897 461 915 473 925M656 851L681 855 701 860 722 868 738 870 758 875M785 873L811 878 824 885 856 890M913 878L926 880M983 875L1024 876M1044 873L1064 876 1089 887M1187 869L1220 878 1252 881M1410 860L1434 863 1458 872M1483 870L1531 869 1564 873 1584 880M1616 872L1629 872 1641 878 1656 887"/>
</g>
<path fill="#eeee00" d="M69 860h5l-5 8-5-8zM376 874h5l-5 8-5-8zM407 878h5l-5 8-5-8zM614 858h5l-5 8-5-8zM970 870h5l-5 8-5-8zM1183 866h5l-5 8-5-8zM1411 860h5l-5 8-5-8zM1619 870h5l-5 8-5-8z"/>
<path fill="#00e8f0" d="M345 887h5l-5-8-5 8zM394 882h5l-5-8-5 8zM473 928h5l-5-8-5 8zM860 893h5l-5-8-5 8zM1092 889h5l-5-8-5 8zM1276 883h5l-5-8-5 8zM1600 879h5l-5-8-5 8z"/>

<!-- PANEL 5 : Barra -->
<g>
<path fill="#6868c0" d="M28 940H47V995H28zM115 940H152V995H115zM176 940H188V995H176zM219 940H231V995H219zM243 940H268V995H243zM274 940H305V995H274zM312 940H329V995H312zM335 940H341V995H335zM390 940H410V995H390zM433 940H488V995H433zM531 940H537V995H531zM1443 940H1474V995H1443zM1615 940H1621V995H1615zM1627 940H1659V995H1627z"/>
<path fill="#aeecff" d="M47 940H84V995H47zM152 940H176V995H152zM188 940H207V995H188zM268 940H274V995H268zM305 940H312V995H305zM329 940H335V995H329zM341 940H390V995H341zM410 940H433V995H410zM488 940H531V995H488zM537 940H617V995H537zM1070 940H1088V995H1070zM1474 940H1512V995H1474zM1584 940H1590V995H1584zM1621 940H1627V995H1621z"/>
<path fill="#ffff80" d="M84 940H90V995H84zM103 940H110V995H103zM207 940H214V995H207zM231 940H237V995H231zM617 940H690V995H617zM715 940H727V995H715zM739 940H807V995H739zM849 940H856V995H849zM874 940H880V995H874zM886 940H917V995H886zM923 940H929V995H923zM947 940H954V995H947zM961 940H972V995H961zM984 940H990V995H984zM996 940H1015V995H996zM1033 940H1039V995H1033zM1088 940H1131V995H1088zM1137 940H1174V995H1137zM1180 940H1192V995H1180zM1217 940H1229V995H1217zM1254 940H1272V995H1254zM1284 940H1303V995H1284zM1327 940H1352V995H1327zM1364 940H1376V995H1364zM1394 940H1419V995H1394zM1512 940H1535V995H1512zM1547 940H1561V995H1547zM1590 940H1596V995H1590z"/>
<path fill="#40ff40" d="M90 940H103V995H90zM690 940H715V995H690zM727 940H739V995H727zM807 940H849V995H807zM856 940H874V995H856zM880 940H886V995H880zM917 940H923V995H917zM929 940H947V995H929zM954 940H961V995H954zM972 940H984V995H972zM990 940H996V995H990zM1015 940H1033V995H1015zM1039 940H1064V995H1039zM1131 940H1137V995H1131zM1174 940H1180V995H1174zM1192 940H1217V995H1192zM1229 940H1254V995H1229zM1272 940H1284V995H1272zM1303 940H1327V995H1303zM1352 940H1364V995H1352zM1376 940H1394V995H1376zM1419 940H1437V995H1419zM1535 940H1547V995H1535zM1561 940H1578V995H1561zM1596 940H1610V995H1596z"/>
<path fill="#660000" d="M110 940H115V995H110zM214 940H219V995H214zM237 940H243V995H237zM1064 940H1070V995H1064zM1437 940H1443V995H1437zM1578 940H1584V995H1578zM1610 940H1615V995H1610z"/>
</g>
<polygon fill="url(#hb)" points="28,995 28,984 47,984 47,995"/>
<polygon fill="url(#hr)" points="47,995 47,985 110,985 110,995"/>
<polygon fill="url(#hb)" points="110,995 110,985 130,982 152,981 152,995"/>
<polygon fill="url(#hr)" points="152,995 152,981 176,983 190,984 205,985 215,987 215,995"/>
<polygon fill="url(#hb)" points="215,995 215,985 235,985 270,982 270,995"/>
<polygon fill="url(#hb)" points="270,995 270,982 294,978 320,978 343,975 343,995"/>
<polygon fill="url(#hr)" points="343,995 343,976 367,979 388,982 388,995"/>
<polygon fill="url(#hb)" points="390,995 390,980 410,980 410,995"/>
<polygon fill="url(#hr)" points="410,995 410,982 433,982 433,995"/>
<polygon fill="url(#hb)" points="433,995 433,980 449,972 461,962 473,947 488,943 488,995"/>
<polygon fill="url(#hr)" points="488,995 488,945 506,953 527,967 547,968 571,978 592,982 617,985 640,988 640,995"/>
<polygon fill="url(#hr)" points="640,995 640,988 690,991 700,995"/>
<polygon fill="url(#hb)" points="700,995 700,988 730,987 730,995"/>
<polygon fill="url(#hr)" points="730,995 730,988 790,990 790,995"/>
<polygon fill="url(#hb)" points="800,995 800,990 850,990 850,995"/>
<polygon fill="url(#hr)" points="850,995 850,989 880,990 900,990 900,995"/>
<polygon fill="url(#hb)" points="900,995 900,990 920,990 920,995"/>
<polygon fill="url(#hr)" points="920,995 920,989 1010,990 1010,995"/>
<polygon fill="url(#hb)" points="1015,995 1015,988 1060,985 1060,995"/>
<polygon fill="url(#hr)" points="1060,995 1060,984 1085,984 1100,987 1200,990 1200,995"/>
<polygon fill="url(#hb)" points="1215,995 1215,990 1235,990 1235,995"/>
<polygon fill="url(#hr)" points="1235,995 1235,990 1290,991 1290,995"/>
<polygon fill="url(#hb)" points="1290,995 1290,990 1325,989 1325,995"/>
<polygon fill="url(#hr)" points="1325,995 1325,989 1385,989 1385,995"/>
<polygon fill="url(#hb)" points="1385,995 1385,988 1400,988 1400,995"/>
<polygon fill="url(#hr)" points="1400,995 1400,988 1418,988 1418,995"/>
<polygon fill="url(#hb)" points="1418,995 1418,987 1443,985 1474,982 1474,995"/>
<polygon fill="url(#hr)" points="1474,995 1474,983 1500,985 1530,987 1530,995"/>
<polygon fill="url(#hr)" points="1530,995 1530,988 1580,989 1580,995"/>
<polygon fill="url(#hr)" points="1580,995 1580,985 1610,985 1610,995"/>
<polygon fill="url(#hb)" points="1610,995 1610,985 1640,983 1659,980 1659,995"/>
<path d="M28 988H1659" stroke="#000" stroke-width="1.2" fill="none"/>

<!-- separators -->
<path d="M28 672.5H1916M28 772.5H1916M28 843.5H1916M28 939.5H1916M28 995.5H1916" stroke="#7c94a0" stroke-width="1.4" fill="none"/>
<path d="M1880 37V1010" stroke="#7c94a0" stroke-width="1.4" fill="none"/>

<!-- panel titles -->
<rect class="pt" x="28.5" y="673.5" width="150" height="14"/><rect x="31" y="676" width="9" height="9" fill="#555"/><rect x="31" y="676" width="4" height="9" fill="#111"/><text x="44" y="684" textLength="131" lengthAdjust="spacingAndGlyphs" style="font-size:11px">Sistema de trenes Doc v4 (f f)</text>
<rect class="pt" x="28.5" y="773.5" width="73" height="13"/><rect x="31" y="776" width="9" height="9" fill="#6a7f8a"/><text x="43" y="784" textLength="56" lengthAdjust="spacingAndGlyphs" style="font-size:11px">Willy Doc (t)</text>
<rect class="pt" x="28.5" y="844.5" width="126" height="14"/><rect x="31" y="847" width="9" height="9" fill="#6a7f8a"/><text x="43" y="855" textLength="109" lengthAdjust="spacingAndGlyphs" style="font-size:11px">Awesome Evolution Doc</text>
<rect class="pt" x="28.5" y="940.5" width="175" height="14"/><rect x="31" y="944" width="9" height="9" fill="#555"/><rect x="31" y="944" width="4" height="9" fill="#111"/><text x="44" y="951" textLength="157" lengthAdjust="spacingAndGlyphs" style="font-size:11px">Barra Fuerza Fondo Mercado v4 (f)</text>

<!-- price axis -->
<g class="ax">
<path d="M1880 41h4M1880 84h4M1880 126h4M1880 168h4M1880 252h4M1880 294h4M1880 335h4M1880 378h4M1880 420h4M1880 462h4M1880 505h4M1880 547h4M1880 589h4M1880 631h4M1880 682h4M1880 698h4M1880 766h4M1880 780h4M1880 794h4M1880 809h4M1880 860h4M1880 913h4M1880 931h4M1880 961h4M1880 989h4" stroke="#334" fill="none"/>
<path d="M1880 722h4M1880 731h4" stroke="#2020c0"/><path d="M1880 736h4M1880 826h4M1880 878h4" stroke="#e01010"/><path d="M1880 750h4M1880 752h4" stroke="#000"/><path d="M1880 884h4" stroke="#e09a20"/><path d="M1880 888h4" stroke="#a000b0"/><path d="M1880 978h4" stroke="#2020c0"/>
<text class="pr" x="1886" y="45">6.000</text><text class="pr" x="1886" y="88">5.900</text><text class="pr" x="1886" y="130">5.800</text><text class="pr" x="1886" y="172">5.700</text>
<text class="pr" x="1886" y="256">5.500</text><text class="pr" x="1886" y="298">5.400</text><text class="pr" x="1886" y="339">5.300</text><text class="pr" x="1886" y="382">5.200</text><text class="pr" x="1886" y="424">5.100</text><text class="pr" x="1886" y="466">5.000</text><text class="pr" x="1886" y="509">4.900</text><text class="pr" x="1886" y="551">4.800</text><text class="pr" x="1886" y="593">4.700</text><text class="pr" x="1886" y="635">4.600</text>
<rect class="bx" x="1884.5" y="183.5" width="33" height="11"/><text class="pb" x="1886" y="193" style="fill:#c8842a">5.652,3</text>
<rect class="bx" x="1884.5" y="196.5" width="33" height="10"/><text class="pb" x="1886" y="205.500" style="fill:#a02020">5.622,7</text>
<rect class="bx" x="1884.5" y="209.5" width="33" height="11"/><text class="pb" x="1886" y="218.500" style="fill:#d02020">5.591,9</text>
<path d="M1880 214h4" stroke="#d02020"/>

<rect class="bx" x="1884.5" y="675.5" width="18" height="12"/><text x="1886" y="685">100</text>
<rect class="bx" x="1884.5" y="693.5" width="12" height="11"/><text x="1886" y="702.500">80</text>
<rect class="bx" x="1884.5" y="709.5" width="31" height="12"/><text x="1886" y="719">57,379</text>
<rect class="bx" x="1884.5" y="717.5" width="12" height="12"/><text x="1886" y="727" style="fill:#2020c0">50</text>
<rect class="bx" x="1884.5" y="724.5" width="31" height="13"/><text x="1886" y="735" style="fill:#f00000">48,182</text>
<rect class="bx" x="1884.5" y="741.5" width="12" height="10"/><text x="1886" y="750">20</text>
<rect class="bx" x="1884.5" y="748.5" width="31" height="11"/><text x="1886" y="757.500">16,444</text>
<rect class="bx" x="1884.5" y="761.5" width="8" height="10"/><text x="1886" y="770">0</text>
<rect class="bx" x="1884.5" y="775.5" width="8" height="10"/><text x="1886" y="784">0</text>
<rect class="bx" x="1884.5" y="789.5" width="16" height="12"/><text x="1886" y="799" style="fill:#2020c0">-25</text>
<rect class="bx" x="1884.5" y="804.5" width="16" height="11"/><text x="1886" y="813.500" style="fill:#2020c0">-50</text>
<rect class="bx" x="1884.5" y="815.5" width="16" height="8"/>
<rect class="bx" x="1884.5" y="821.5" width="33" height="12"/><text x="1886" y="830" style="fill:#b01010">-77,747</text>
<rect class="bx" x="1884.5" y="832.5" width="22" height="10.500"/><text x="1886" y="841">-100</text>

<text x="1886" y="864">200</text>
<rect class="bx" x="1884.5" y="866" width="8" height="9"/><text x="1886" y="874" style="fill:#2020c0">0</text>
<text x="1886" y="882" style="fill:#e01010">0</text>
<rect class="bx" x="1884.5" y="880.5" width="33" height="11" style="fill:#fff;stroke:none"/><text x="1886" y="889" style="fill:#e09a20">-84,882</text>
<text x="1886" y="894" style="fill:#a000b0">-148,54</text>
<rect class="bx" x="1884.5" y="891.5" width="33" height="12"/><text x="1886" y="900.500" style="fill:#f00000">-146,54</text>
<text x="1886" y="917">-400</text>
<text x="1886" y="935">-600</text>
<text x="1886" y="966">1</text>
<rect class="bx" x="1884.5" y="974.5" width="29" height="10" style="fill:#fff"/><text x="1886" y="982" style="fill:#2020c0">0,6116</text>
<rect class="bx" x="1884.5" y="984.5" width="29" height="11"/><text x="1886" y="993">0,5000</text>
</g>

<!-- time axis -->
<rect x="28" y="996" width="1888" height="14" fill="#fff"/>
<path d="M1880 996V1010" stroke="#7c94a0" stroke-width="1.4"/>
<g class="d">
<text x="57" y="1008.500">20</text><text x="87" y="1008.500">26</text><text x="124" y="1008.500">feb</text><text x="161" y="1008.500">09</text><text x="191" y="1008.500">14</text><text x="216" y="1008.500">19</text><text x="240" y="1008.500">24</text><text x="271" y="1008.500">mar</text><text x="295" y="1008.500">06</text><text x="320" y="1008.500">11</text><text x="344" y="1008.500">16</text><text x="375" y="1008.500">21</text><text x="399" y="1008.500">26</text><text x="430" y="1008.500">abr</text><text x="455" y="1008.500">06</text><text x="479" y="1008.500">10</text><text x="503" y="1008.500">15</text><text x="522" y="1008.500">20</text><text x="552" y="1008.500">25</text><text x="583" y="1008.500">may</text><text x="601" y="1008.500">05</text><text x="632" y="1008.500">11</text><text x="657" y="1008.500">15</text><text x="681" y="1008.500">20</text><text x="706" y="1008.500">25</text><text x="742" y="1008.500">jun</text><text x="761" y="1008.500">04</text><text x="785" y="1008.500">09</text><text x="816" y="1008.500">15</text><text x="840" y="1008.500">19</text><text x="865" y="1008.500">24</text><text x="902" y="1008.500">jul</text><text x="920" y="1008.500">04</text><text x="944" y="1008.500">09</text><text x="969" y="1008.500">14</text><text x="999" y="1008.500">20</text><text x="1024" y="1008.500">24</text><text x="1048" y="1008.500">29</text><text x="1067" y="1008.500">ago</text><text x="1104" y="1008.500">08</text><text x="1128" y="1008.500">13</text><text x="1152" y="1008.500">18</text><text x="1183" y="1008.500">24</text><text x="1208" y="1008.500">28</text><text x="1227" y="1008.500">sept</text><text x="1257" y="1008.500">07</text><text x="1287" y="1008.500">12</text><text x="1312" y="1008.500">17</text><text x="1336" y="1008.500">22</text><text x="1367" y="1008.500">28</text><text x="1386" y="1008.500">oct</text><text x="1416" y="1008.500">07</text><text x="1440" y="1008.500">12</text><text x="1471" y="1008.500">17</text><text x="1495" y="1008.500">22</text><text x="1520" y="1008.500">27</text><text x="1550" y="1008.500">nov</text><text x="1575" y="1008.500">06</text><text x="1599" y="1008.500">11</text><text x="1624" y="1008.500">16</text><text x="1655" y="1008.500">21</text><text x="1685" y="1008.500">26</text><text x="1717" y="1008.500">dic</text><text x="1746" y="1008.500">06</text><text x="1777" y="1008.500">11</text><text x="1808" y="1008.500">16</text><text x="1838" y="1008.500">21</text><text x="1869" y="1008.500">26</text>
</g>
<path d="M32 996v4M57 996v3M87 996v3M124 996v3M161 996v3M191 996v3M216 996v3M240 996v3M271 996v3M295 996v3M320 996v3M344 996v3M375 996v3M399 996v3M430 996v3M455 996v3M479 996v3M503 996v3M522 996v3M552 996v3" stroke="#556" fill="none"/>

<!-- top bar -->
<rect width="1916" height="22" fill="url(#top)"/>
<path d="M0 .5H1916" stroke="#60808e"/>
<path d="M0 21.5H1916" stroke="#5d7582" stroke-width="1.4"/>
<path d="M23.5 2V21M39.5 2V21M84.5 2V21M322.500 2V21M363.5 2V21M457.5 2V21M541.5 2V21M640.5 2V21M1851.5 2V21" stroke="#7e97a4" fill="none"/>
<g stroke-width="2.4" fill="none"><path d="M9 15v-5" stroke="#2aa02a"/><path d="M12 14V8" stroke="#2aa02a"/><path d="M15 13V7" stroke="#2aa02a"/><path d="M18 11V5" stroke="#2aa02a"/></g>
<rect x="28" y="5" width="6" height="5" rx="1" fill="#7e8f98"/><rect x="28" y="12" width="6" height="5" rx="1" fill="#7e8f98"/>
<text x="44" y="15">STXE</text><path d="M71 9l3 3 3-3" stroke="#222" fill="none"/>
<g>
<rect class="bt" x="87.5" y="4.5" width="20" height="14" rx="3"/><text x="90" y="15">12s</text>
<rect class="bt" x="111.5" y="4.5" width="26" height="14" rx="3"/><text x="114" y="15">144s</text>
<rect class="bt" x="140.5" y="4.5" width="19" height="14" rx="3"/><text x="143" y="15">1m</text>
<rect class="bt" x="162.5" y="4.5" width="24" height="14" rx="3"/><text x="165" y="15">12m</text>
<rect class="bt" x="189.5" y="4.5" width="24" height="14" rx="3"/><text x="192" y="15">56m</text>
<rect class="bt" x="216.5" y="4.5" width="17" height="14" rx="3"/><text x="219" y="15">1h</text>
<rect class="bt" x="236.5" y="4.5" width="17" height="14" rx="3"/><text x="239" y="15">4h</text>
<rect class="sel" x="256.5" y="4.5" width="13" height="14" rx="3"/><text x="259" y="15">D</text>
<rect class="bt" x="273.5" y="4.5" width="14" height="14" rx="3"/><text x="275" y="15">W</text>
<rect class="bt" x="290.5" y="4.5" width="14" height="14" rx="3"/><text x="293" y="15">M</text>
<rect class="bt" x="306.5" y="4.5" width="13" height="14" rx="3"/><text x="309" y="15">Q</text>
<text x="328" y="15">1 día</text><path d="M355 9l3 3 3-3" stroke="#222" fill="none"/>
<rect class="bt" x="369.5" y="4.5" width="23" height="14" rx="3"/><text x="372" y="15">5kU</text>
<rect class="sel" x="395.5" y="4.5" width="28" height="14" rx="3"/><text x="398" y="15">10kU</text>
<rect class="bt" x="426.5" y="4.5" width="27" height="14" rx="3"/><text x="429" y="15">35kU</text>
<text x="463" y="15" textLength="63" lengthAdjust="spacingAndGlyphs">10 k unidades</text><path d="M531 9l3 3 3-3" stroke="#222" fill="none"/>
<path d="M547 11l4-5 4 5 4-3 4 2" stroke="#c03030" fill="none"/><path d="M547 8l5 5 5-5 6 3" stroke="#2a9a2a" fill="none"/><rect x="548" y="15" width="14" height="4" fill="#2aa02a"/>
<text x="568" y="15" textLength="53" lengthAdjust="spacingAndGlyphs">Indicadores</text><path d="M629 9l3 3 3-3" stroke="#222" fill="none"/>
</g>
<rect x="648" y="6" width="9" height="11" fill="#eef3f5" stroke="#8aa0ac"/><text x="651" y="15" style="font-size:10px;font-weight:bold;fill:#778">i</text>
<circle cx="670" cy="11" r="3.5" fill="#889"/>
<rect x="680" y="4" width="38" height="14" rx="3" fill="#4fe04f"/><text x="682" y="15" style="fill:#eaffea">+0,91 %</text>
<text x="723" y="15" style="font-weight:bold" textLength="53" lengthAdjust="spacingAndGlyphs">21 nov 2025</text>
<rect x="781.5" y="4.5" width="105" height="14" rx="3" fill="#d8e8b8" stroke="#a8c090"/><text x="784" y="15" textLength="100" lengthAdjust="spacingAndGlyphs">EU Stocks 50 Cash (2€)</text>
<path d="M1857 8l4-3 2 4M1862 15l4 3 3-5" stroke="#d03030" stroke-width="1.6" fill="none"/><path d="M1860 11c2-4 8-4 10 0" stroke="#30a030" stroke-width="1.6" fill="none"/>
<path d="M1876 16h8" stroke="#6a8290" stroke-width="1.6"/><rect x="1892" y="9" width="7" height="7" fill="none" stroke="#6a8290"/><rect x="1894" y="7" width="7" height="7" fill="none" stroke="#6a8290"/><path d="M1904 7l8 9M1912 7l-8 9" stroke="#6a8290" stroke-width="1.6"/>

<!-- second row -->
<rect x="0" y="22" width="28" height="15" fill="#9cb7c5"/>
<path d="M11 30l3-3 3 3" stroke="#567" fill="none"/>
<g>
<rect class="ce" x="30.5" y="23.5" width="13" height="13"/><path d="M37 35l-4-5h2.5v-4h3v4H41z" fill="#e02020"/>
<rect class="ce" x="43.5" y="23.5" width="13" height="13"/><path d="M50 25l4 5h-2.5v4h-3v-4H46z" fill="#22b022"/>
<rect class="ce" x="59.5" y="23.5" width="46" height="13"/><rect x="63" y="26.5" width="7" height="8" fill="#fff" stroke="#889"/><text x="74" y="34" textLength="29" lengthAdjust="spacingAndGlyphs">Precio</text>
<rect class="ce" x="105.5" y="23.5" width="17" height="13"/><path d="M110 27h9M110 30h9M110 33h9" stroke="#333" fill="none"/>
<rect class="ce" x="122.5" y="23.5" width="64" height="13"/><rect x="127" y="26.5" width="6" height="8" fill="#fff" stroke="#889"/><text x="138" y="34" textLength="46" lengthAdjust="spacingAndGlyphs">Cierre (W)</text>
<rect class="ce" x="186.5" y="23.5" width="137" height="13"/><rect x="190" y="26" width="8" height="9" fill="#728794"/><text x="202" y="34" textLength="119" lengthAdjust="spacingAndGlyphs">Tunel Domenec v4 (t t t t t)</text>
<rect class="ce" x="323.5" y="23.5" width="141" height="13"/><rect x="327" y="26" width="8" height="9" fill="#000"/><text x="339" y="34" textLength="123" lengthAdjust="spacingAndGlyphs">Multi Avisos (3 f 3 1,5 70 f f)</text>
<rect class="ce" x="464.5" y="23.5" width="196" height="13"/><rect x="469" y="26.5" width="7" height="8" fill="#fff" stroke="#889"/><text x="480" y="34" textLength="178" lengthAdjust="spacingAndGlyphs">DS_CotasHist (1 t t t 3 1 1 f f f f f f f f ...)</text>
<rect class="ce" x="660.5" y="23.5" width="114" height="13"/><path d="M665 26v9" stroke="#e02020" stroke-width="1.5"/><path d="M668 26v9" stroke="#111" stroke-width="1.5"/><path d="M671 26v9" stroke="#2020c0" stroke-width="1.5"/><text x="676" y="34" textLength="97" lengthAdjust="spacingAndGlyphs">Control Total Doc v.6</text>
</g>

<!-- left toolbar -->
<rect x="0" y="37" width="28" height="973" fill="#9cb7c5"/>
<path d="M27.5 22V1032" stroke="#6f8a98"/>
<rect x="3.5" y="35.5" width="21" height="21" rx="3" fill="#8ba2ae" stroke="#7890a0"/>
<path d="M11 41v12l3-3 2 4 2-1-2-4h4z" fill="#6a7f8a" stroke="#e0e8ec" stroke-width=".8"/>
<g fill="none" stroke-width="1.4">
<circle cx="13" cy="66" r="4" stroke="#334"/><path d="M16 69l4 4" stroke="#334"/>
<circle cx="14" cy="88" r="4" stroke="#334"/><path d="M17 91l4 4" stroke="#334"/><path d="M6 86v8h8" stroke="#2060d0" stroke-dasharray="2 1"/>
<path d="M9 116c2 0 1-8 5-8s3 8 5 8z" fill="#f2d020" stroke="#806000"/><path d="M13 104l6 5M19 104l-6 5" stroke="#2060d0"/>
<path d="M7 139c2 0 1-10 7-10s5 10 7 10z" fill="#f2d020" stroke="#806000"/><path d="M12 139a2 2 0 0 0 4 0" stroke="#806000"/>
<path d="M6 160l3-10 3 10M13 157h7" stroke="#2060d0"/><text x="18" y="163" style="font-size:8px;font-weight:bold;fill:#2060d0">F</text>
<path d="M8 177h10M8 180h10" stroke="#e08040" stroke-dasharray="2 1"/><text x="18" y="186" style="font-size:8px;font-weight:bold;fill:#2060d0">F</text>
<rect x="8" y="196" width="12" height="8" stroke="#2040d0"/>
<rect x="8" y="218" width="12" height="8" stroke="#e01010" fill="#b0a0a8"/>
<path d="M9 249l10-10" stroke="#111" stroke-width="2.4"/><path d="M15 238h5v5" stroke="#111" stroke-width="2"/>
<rect x="8" y="259" width="12" height="13" rx="2" fill="#b8d0dc" stroke="#7890a0"/>
<circle cx="14" cy="288" r="7" stroke="#4080d0"/>
<path d="M9 314l10-10" stroke="#222"/><circle cx="9" cy="314" r="1.5" stroke="#222"/><circle cx="19" cy="304" r="1.5" stroke="#222"/>
<path d="M11 332h11" stroke="#20a050" stroke-width="2"/><circle cx="12" cy="332" r="1.5" stroke="#20a050"/>
<path d="M11 354h11" stroke="#e01010" stroke-width="2"/><circle cx="12" cy="354" r="1.5" stroke="#e01010"/>
<path d="M8 382l11-11 4 4-11 11z" fill="#c8d0d4" stroke="#667"/>
<rect x="8" y="391" width="13" height="14" fill="#a8c8a8" stroke="#90a0a8" stroke-dasharray="2 1"/>
<ellipse cx="14" cy="420" rx="6" ry="5" stroke="#e01010" fill="#b8a8b0"/>
<ellipse cx="14" cy="442" rx="6" ry="5" stroke="#8a5a20" fill="#a8a898"/>
<ellipse cx="14" cy="464" rx="6" ry="5" stroke="#0a7a0a" fill="#80a890"/>
<ellipse cx="14" cy="486" rx="6" ry="5" stroke="#10e010" fill="#90c8a0"/>
<path d="M6 517l16-19" stroke="#222"/><path d="M6 539l16-19" stroke="#30a030"/><path d="M6 560l16-19" stroke="#e01010" stroke-width="1.6"/>
<path d="M5 574h18" stroke="#111"/><path d="M5 596h18" stroke="#f08a80" stroke-width="2"/><path d="M5 618h18" stroke="#20e020" stroke-width="2"/><path d="M5 640h18" stroke="#108a10" stroke-width="2"/><path d="M5 662h18" stroke="#e01010" stroke-width="2"/><path d="M5 684h18" stroke="#7ab0e8" stroke-width="2"/><path d="M5 706h18" stroke="#1020a0" stroke-width="2"/>
<path d="M14 720v17" stroke="#111" stroke-width="1.4"/>
<path d="M7 754l10-10v10z" stroke="#d06050"/><text x="17" y="751" style="font-size:8px;fill:#206080">α</text>
<circle cx="14" cy="771" r="6" stroke="#d08040"/><path d="M11 771h6M14 768v6" stroke="#2040d0"/>
</g>
<text x="10" y="270" style="font-size:11px;font-weight:bold;fill:#111">T</text>
<text x="10.500" y="292" style="font-size:11px;font-weight:bold;fill:#1a8a3a">T</text>
<text x="6" y="793" style="font-size:7px;fill:#2040c0">2 4 3</text><text x="6" y="802" style="font-size:7px;fill:#2040c0">+2 +4</text>
<text x="7" y="814" style="font-size:7px;fill:#2040c0">+b</text><text x="7" y="823" style="font-size:7px;fill:#2040c0">a c+</text>
<path d="M8 838l4 5 9-11-8 18z" fill="#40a040" stroke="#2a802a"/>
<path d="M8 852h3v10H8zM12 852l4-5v5h4l-1 10h-7z" fill="#48a848" stroke="#2a802a" stroke-width=".6"/>
<path d="M8 875l12 13M20 875l-12 13" stroke="#e01010" stroke-width="4"/>
<path d="M14 897l7 14H7z" fill="#f0c020" stroke="#a07000"/><path d="M14 901v5M14 908v1" stroke="#802000"/>
<path d="M14 920l5 6h-3v7h-4v-7H9z" fill="#20a040" stroke="#107030" stroke-width=".6"/>
<rect x="0" y="945" width="27" height="11" fill="#b4ccd8" stroke="#7890a0"/>
<path d="M11 949l3 3 3-3" stroke="#223" fill="none"/>
<rect x="9" y="964" width="12" height="15" fill="#eee" stroke="#667"/><circle cx="11" cy="961" r="3.5" fill="none" stroke="#208030" stroke-width="1.6"/><path d="M14 967l8 9" stroke="#333"/>
<path d="M10 998h2M14 998h2M18 998h2" stroke="#333" stroke-width="2"/><path d="M16 1002l3 3 3-3z" fill="#222"/>

<!-- bottom bar -->
<rect x="28" y="1010" width="1888" height="22" fill="#9cb7c5"/>
<rect x="0" y="1010" width="28" height="22" fill="#8aa3b1"/>
<path d="M0 1010.5H1916" stroke="#6f8a98"/><path d="M0 1031.5H1916" stroke="#6f8a98"/>
<path d="M8 1014v14h14" stroke="#445" fill="none"/><path d="M9 1027l4-8 3 5 2-3" stroke="#d02020" fill="none"/><path d="M13 1028l7-12 3 2-7 11z" fill="#f0c820" stroke="#806000" stroke-width=".7"/>
<g fill="none" stroke-width="1.4">
<path d="M33 1020l8-5M33 1021l8 5" stroke="#eef"/><circle cx="33" cy="1020" r="2" fill="#eef" stroke="#778"/><circle cx="42" cy="1015" r="2" fill="#eef" stroke="#778"/><circle cx="42" cy="1027" r="2" fill="#eef" stroke="#778"/>
<rect x="53" y="1013" width="9" height="12" rx="1" fill="#e8f0f8" stroke="#a8c0d8"/><rect x="56" y="1018" width="10" height="8" rx="2" fill="#2f84d8" stroke="#2f84d8"/>
<rect x="76" y="1015" width="10" height="13" fill="#fff" stroke="#667"/><path d="M78 1019h6" stroke="#d03030"/><path d="M78 1023h6" stroke="#30a030"/>
<path d="M101 1013v17M95 1017h12M96 1022h10M94 1026h12" stroke="#20a040" stroke-width="2"/><path d="M98 1022h7" stroke="#d03030"/>
<rect x="115" y="1013" width="9" height="9" fill="#fff" stroke="#3070c0"/><rect x="119" y="1018" width="10" height="10" fill="#fff" stroke="#3070c0"/><path d="M120 1026l3-4 2 2 3-3" stroke="#30a030" stroke-width="1"/>
<path d="M138 1017l-3 4 3 4M142 1017l-3 4 3 4" stroke="#556"/>
</g>
<rect x="148.5" y="1014.5" width="11" height="14" fill="#d2e2ea" stroke="#7890a0"/><path d="M155 1019l-3 2.500 3 2.500" stroke="#222" fill="none"/>
<rect x="160" y="1014" width="1593" height="14" fill="#9cb7c5" stroke="#88a3b1"/>
<rect x="1688.5" y="1014.5" width="48" height="14" fill="#b7d0dc" stroke="#8fa9b6"/>
<rect x="1753.5" y="1014.5" width="10" height="14" fill="#d2e2ea" stroke="#7890a0"/><path d="M1757 1019l3 2.500-3 2.500" stroke="#222" fill="none"/>
<g fill="none" stroke-width="1.8">
<path d="M1774 1019l4-4M1774 1019l4 4M1774 1019h8c3 0 4 3 3 8" stroke="#2060d0"/>
<path d="M1805 1019l-4-4M1805 1019l-4 4M1805 1019h-8c-3 0-4 3-3 8" stroke="#a8c0d0"/>
<path d="M1819 1026l6-9 4 3-6 8z" stroke="#c03030" fill="#eee" stroke-width="1.2"/><path d="M1829 1014v13" stroke="#20a040"/>
<circle cx="1843" cy="1019" r="4.500" stroke="#223"/><path d="M1846 1023l4 4M1838 1027h14" stroke="#223"/><path d="M1855 1014v13" stroke="#2060d0"/>
<circle cx="1865" cy="1019" r="4.500" stroke="#223" fill="#fff"/><path d="M1868 1023l4 4M1863 1019h4" stroke="#223"/>
<circle cx="1887" cy="1019" r="4.500" stroke="#223" fill="#fff"/><path d="M1890 1023l4 4" stroke="#223"/><path d="M1885 1019h4M1887 1017v4" stroke="#2060d0"/>
<path d="M1904 1015h9M1908 1019h2" stroke="#223" stroke-dasharray="1 1"/><path d="M1909 1020v6M1906 1024l3 3 3-3" stroke="#2060d0"/>
</g>
</svg>
</body></html>
